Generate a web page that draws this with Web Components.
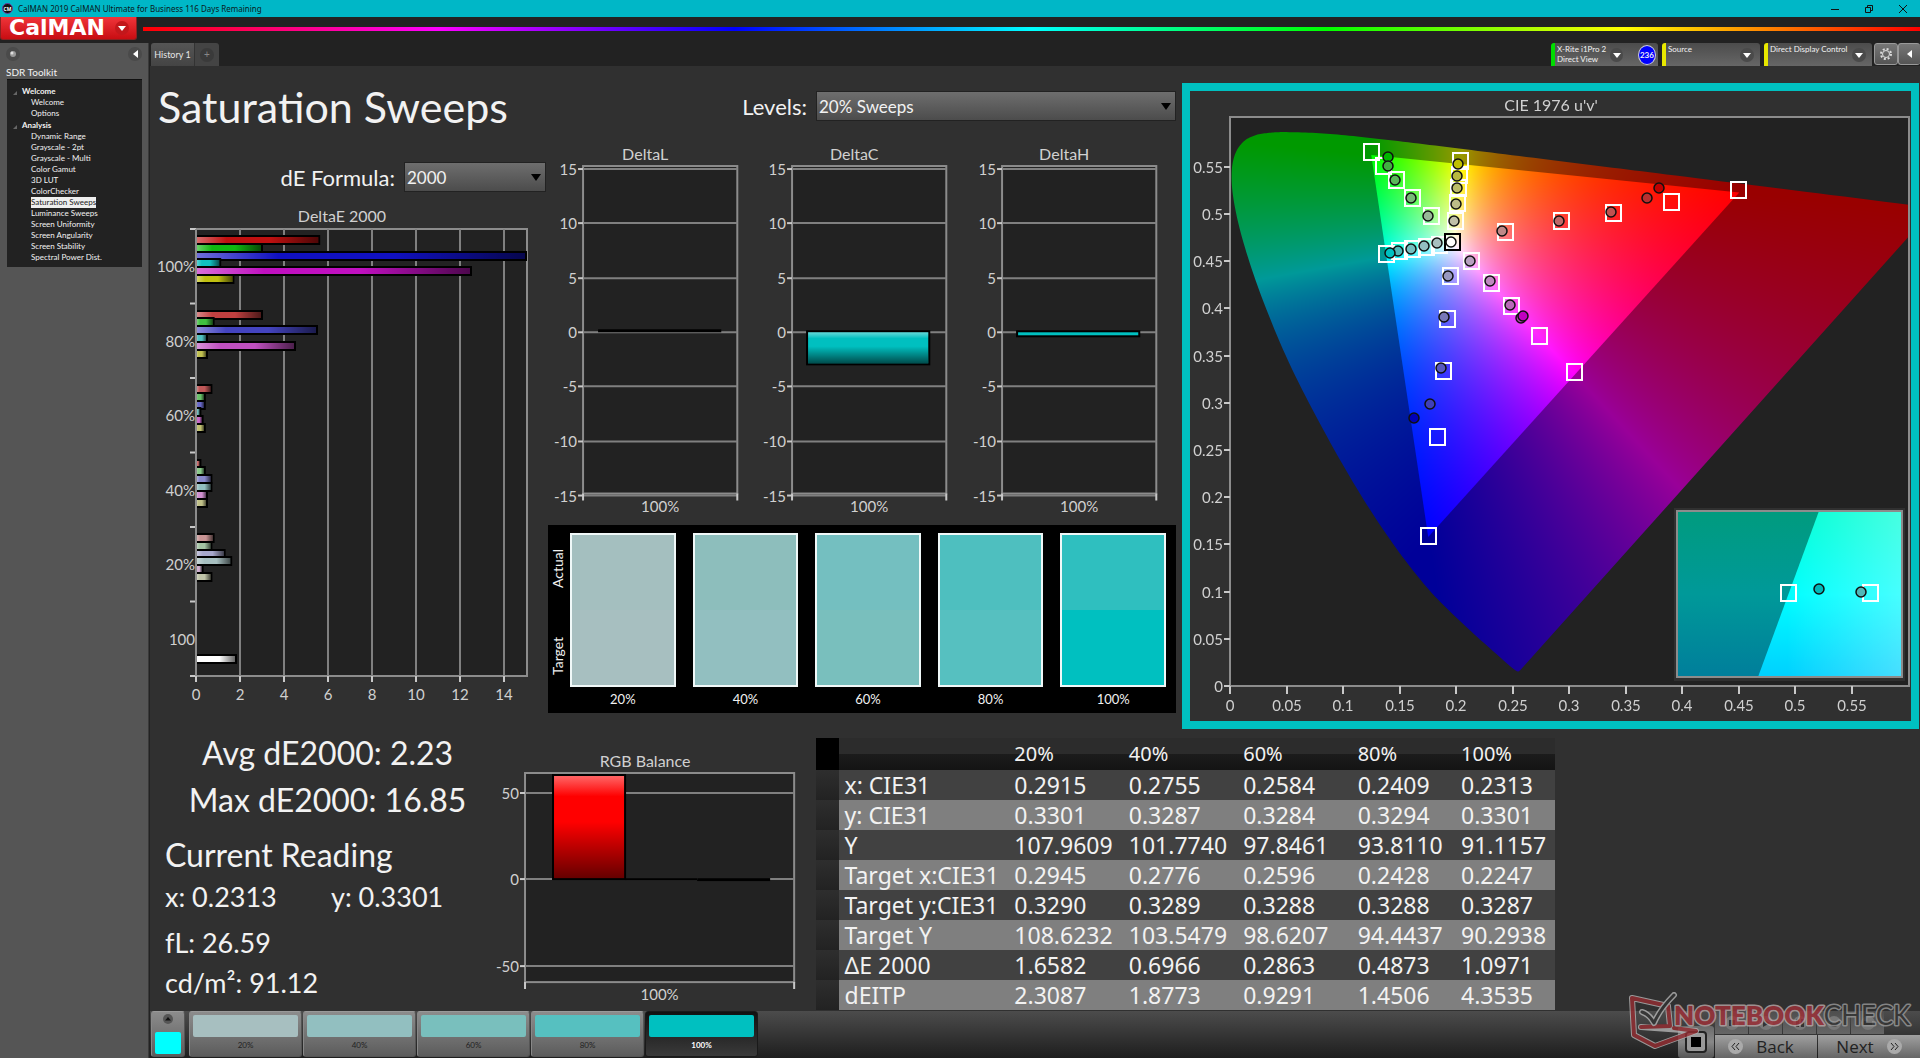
<!DOCTYPE html>
<html lang="en">
<head>
<meta charset="utf-8">
<title>CalMAN 2019</title>
<style>
  html, body { margin: 0; height: 100%; }
  body {
    background: #222;
    color: #f2f2f2;
    font-family: Lato, "Open Sans", sans-serif;
  }
</style>
</head>
<body>
<cal-app></cal-app>

<script>
const SVG_ARROW = '<svg viewBox="0 0 10 6" width="8" height="5"><path d="M0 0h10L5 6z" fill="#fff"/></svg>';

function define(name, html, setup) {
  const template = document.createElement('template');
  template.innerHTML = html;
  customElements.define(name, class extends HTMLElement {
    constructor() {
      super();
      this.attachShadow({ mode: 'open' }).append(template.content.cloneNode(true));
    }
    connectedCallback() {
      if (setup) setup.call(this, this.shadowRoot);
    }
  });
}

/* ---------- window title bar ---------- */
define('title-bar', `
  <style>
    :host {
      display: flex; align-items: center; height: 17px; gap: 5px; padding-left: 2px;
      background: #00b7c7; color: #0a1a1c; font: 8px "Noto Sans", sans-serif;
    }
    .name { flex: 1; }
    .logo { margin: 0; }
    .window { display: flex; }
    button { width: 34px; height: 17px; padding: 0; border: 0; background: none; }
    svg { display: block; margin: auto; }
  </style>
  <svg class="logo" width="11" height="11" viewBox="0 0 11 11">
    <circle cx="5.5" cy="5.5" r="5" fill="#111" stroke="#6b3fa0"/>
    <text x="5.5" y="7.5" font-size="5" font-weight="700" text-anchor="middle" fill="#fff">CM</text>
  </svg>
  <span class="name">CalMAN 2019 CalMAN Ultimate for Business 116 Days Remaining</span>
  <div class="window">
    <button aria-label="Minimize"><svg width="8" height="8"><path d="M0 4.5h8" stroke="#111"/></svg></button>
    <button aria-label="Restore"><svg width="8" height="8" fill="none" stroke="#111"><path d="M.5 2.5h5v5h-5zM2.5 2V.5h5v5H6"/></svg></button>
    <button aria-label="Close"><svg width="8" height="8"><path d="M0 0l8 8M8 0L0 8" stroke="#111"/></svg></button>
  </div>
`);

/* ---------- red menu button and spectrum line ---------- */
define('brand-bar', `
  <style>
    :host { display: flex; height: 26px; gap: 6px; background: #222; }
    button {
      display: flex; align-items: center; gap: 10px; width: 137px; height: 23px; padding: 0 0 0 8px;
      border: 1px solid #8c2020; border-top: 0; border-radius: 0 0 3px 3px; color: #fff;
      background: linear-gradient(#f0353a, #c80d12); font: bold 22px/22px "DejaVu Sans", sans-serif;
    }
    .dot { display: grid; place-items: center; width: 14px; height: 14px; border-radius: 50%; background: #c3171b; }
    .line {
      flex: 1; height: 4px; margin-top: 10px;
      background: linear-gradient(90deg, #f00, #f0f 16.6%, #00f 33.3%, #0ff 50%, #0f0 66.6%, #ff0 83.3%, #f00);
    }
  </style>
  <button>CalMAN<span class="dot">${SVG_ARROW}</span></button>
  <div class="line"></div>
`);

/* ---------- workflow tree ---------- */
define('tool-sidebar', `
  <style>
    :host { display: block; width: 149px; box-sizing: border-box; padding: 0 6px; background: #555; border-right: 1px solid #3a3a3a; }
    .top { display: flex; justify-content: space-between; align-items: center; height: 22px; }
    .top button { width: 14px; height: 14px; padding: 0; border: 0; border-radius: 50%; background: #4a4a4a; display: grid; place-items: center; }
    h2 { margin: 0; font: 10px/14px Lato, sans-serif; }
    nav { background: #222; border-top: 1px solid #111; padding: 5px 0 2px; margin: 0 0 0 1px; height: 180px; font-size: 8px; line-height: 11px; }
    b { display: block; padding-left: 15px; margin-top: 1px; position: relative; }
    b::before { content: ""; position: absolute; left: 6px; top: 5px; border: 2px solid transparent; border-right-color: #666; border-bottom-color: #666; }
    ul { margin: 0; padding: 0 0 0 24px; list-style: none; }
    a { color: inherit; text-decoration: none; }
    a[aria-current] { background: #eee; color: #222; display: inline-block; }
  </style>
  <div class="top">
    <button aria-label="Pin"><svg width="8" height="8"><circle cx="4" cy="4" r="3" fill="#999"/><circle cx="3" cy="3" r="1.5" fill="#ddd"/></svg></button>
    <button aria-label="Collapse"><svg width="5" height="8"><path d="M5 0v8L0 4z" fill="#fff"/></svg></button>
  </div>
  <h2>SDR Toolkit</h2>
  <nav></nav>
`, function (root) {
  const tree = {
    Welcome: ['Welcome', 'Options'],
    Analysis: ['Dynamic Range', 'Grayscale - 2pt', 'Grayscale - Multi', 'Color Gamut', '3D LUT', 'ColorChecker',
      'Saturation Sweeps', 'Luminance Sweeps', 'Screen Uniformity', 'Screen Angularity', 'Screen Stability', 'Spectral Power Dist.'],
  };
  root.querySelector('nav').innerHTML = Object.entries(tree).map(([group, items]) => `
    <b>${group}</b>
    <ul>${items.map((t) => `<li><a href="#"${t === 'Saturation Sweeps' ? ' aria-current="page"' : ''}>${t}</a></li>`).join('')}</ul>
  `).join('');
});

/* ---------- history tabs and devices ---------- */
define('device-button', `
  <style>
    :host { display: block; }
    button {
      display: flex; box-sizing: border-box; width: 100%; height: 23px; padding: 1px 6px 0 2px; gap: 4px; text-align: left;
      border: 0; border-left: 4px solid var(--led); border-radius: 3px 3px 0 0; color: #f2f2f2;
      background: linear-gradient(#4c4c4c, #666); font: 8px/10px Lato, sans-serif;
    }
    .text { flex: 1; white-space: nowrap; }
    .dot { display: grid; place-items: center; width: 14px; height: 14px; margin-top: 4px; border-radius: 50%; background: #4a4a4a; }
  </style>
  <button><span class="text"><slot></slot></span><span class="dot">${SVG_ARROW}</span><slot name="badge"></slot></button>
`);

define('tab-strip', `
  <style>
    :host { display: flex; height: 23px; padding-left: 1px; background: #222; }
    button { padding: 0; color: #e6e6e6; }
    .tab { width: 44px; border: 0; border-right: 1px solid #333; border-radius: 3px 0 0 0; background: linear-gradient(#555, #444); font: 9px Lato, sans-serif; }
    .add { width: 24px; border: 0; border-radius: 0 3px 0 0; background: #444; color: #888; font-size: 10px; }
    .add span { display: block; width: 14px; margin: auto; border-radius: 50%; background: #3a3a3a; line-height: 14px; }
    .devices { display: flex; gap: 4px; margin-left: auto; }
    .badge {
      width: 18px; height: 18px; margin: 1px -4px 0 11px; border: 1px solid #ccd; border-radius: 50%;
      background: #00f; font: bold 8px/18px Lato, sans-serif; text-align: center;
    }
    .tools { display: flex; margin-left: -2px; }
    .tools button { display: grid; place-items: center; width: 24px; height: 22px; border: 1px solid #999; border-radius: 3px; background: linear-gradient(#777, #555); }
    .tools button:last-child { width: 22px; border-right: 0; }
  </style>
  <button class="tab">History 1</button><button class="add" aria-label="New tab"><span>+</span></button>
  <div class="devices">
    <device-button style="width:107px;--led:#0d0">X-Rite i1Pro 2<br>Direct View<span class="badge" slot="badge">236</span></device-button>
    <device-button style="width:98px;--led:#e8e800">Source</device-button>
    <device-button style="width:108px;--led:#e8e800">Direct Display Control</device-button>
    <div class="tools">
      <button aria-label="Settings"><svg width="14" height="14" viewBox="0 0 14 14" fill="none" stroke="#ddd">
        <circle cx="7" cy="7" r="3.5"/><circle cx="7" cy="7" r="5" stroke-width="2" stroke-dasharray="2 1.93"/></svg></button>
      <button aria-label="Collapse"><svg width="5" height="8"><path d="M5 0v8L0 4z" fill="#fff"/></svg></button>
    </div>
  </div>
`);

/* ---------- labelled drop-down ---------- */
define('pick-list', `
  <style>
    :host { display: flex; align-items: center; justify-content: flex-end; gap: 9px; }
    label { font-size: 22px; white-space: nowrap; }
    .box { position: relative; width: var(--w); }
    select {
      appearance: none; display: block; width: 100%; height: 30px; padding: 0 2px; border: 1px solid #222; border-radius: 0;
      background: linear-gradient(#6e6e6e, #4c4c4c); color: #f2f2f2; font: 17px Lato, sans-serif;
    }
    svg { position: absolute; right: 5px; top: 12px; }
  </style>
  <label for="s"></label>
  <div class="box"><select id="s"><option></option></select><svg width="10" height="7"><path d="M0 0h10L5 7z" fill="#000"/></svg></div>
`, function (root) {
  root.querySelector('label').textContent = this.getAttribute('label');
  root.querySelector('option').textContent = this.getAttribute('value');
});

const CHART_CSS = `
  :host { display: block; min-width: 0; }
  svg { display: block; width: 100%; height: auto; }
  text { font: 15px Lato, sans-serif; fill: #d0d0d0; }
  .title { font-size: 16px; text-anchor: middle; }
  .end { text-anchor: end; }
  .mid { text-anchor: middle; }
  .plot { fill: #222; stroke: #8c8c8c; stroke-width: 2; }
  .grid { stroke: #808080; stroke-width: 2; }
  .tick { stroke: #c8c8c8; stroke-width: 2; }
`;

/* ---------- DeltaE by saturation, horizontal bars ---------- */
define('sweep-chart', `<style>${CHART_CSS}</style><svg viewBox="0 0 398 508"></svg>`, function (root) {
  const left = 46, top = 25, right = 377, bottom = 472, unit = 22;
  const groups = [
    ['100%', [5.6, 3, 15, 1.1, 12.5, 1.7], ['#c01010', '#10b810', '#1010c0', '#10c0c0', '#c010c0', '#c0c010']],
    ['80%', [3, .8, 5.5, .5, 4.5, .5], ['#c04040', '#40c040', '#4444c0', '#50c0c0', '#c050c0', '#c0c050']],
    ['60%', [.7, .4, .4, .2, .3, .4], ['#c05858', '#68c068', '#6868c8', '#74c0c0', '#c868c8', '#c0c070']],
    ['40%', [.2, .4, .7, .7, .5, .5], ['#d07070', '#88c888', '#8888cc', '#92bfc0', '#d090d0', '#c0c088']],
    ['20%', [.8, .7, 1.3, 1.6, .3, .7], ['#c89494', '#a4c4a4', '#a8a8cc', '#a7bfc0', '#d0b0d0', '#c0c4a8']],
    ['100', [], []],
  ];
  let out = `<text class="title" x="192" y="18">DeltaE 2000</text><rect class="plot" x="${left}" y="${top}" width="${right - left}" height="${bottom - top}"/>`;
  let defs = '';
  for (let v = 0; v <= 14; v += 2) {
    const x = left + v * unit;
    if (v) out += `<path class="grid" d="M${x} ${top}V${bottom}"/>`;
    out += `<path class="tick" d="M${x} ${bottom}v6"/><text class="mid" x="${x}" y="496">${v}</text>`;
  }
  const bar = (id, y, w, color) => {
    defs += `<linearGradient id="${id}"><stop offset="0" stop-color="#fff" stop-opacity=".4"/><stop offset=".25" stop-color="#fff" stop-opacity="0"/><stop offset=".6" stop-opacity="0"/><stop offset="1" stop-opacity=".6"/></linearGradient>`;
    out += `<path d="M${left} ${y - 4}h${w}v8h-${w}" fill="${color}" stroke="#000" stroke-width="2"/><rect x="${left}" y="${y - 3}" width="${w - 1}" height="6" fill="url(#${id})"/>`;
  };
  groups.forEach(([name, values, colors], g) => {
    const y = top + g * 74.5;
    out += `<path class="tick" d="M${left - 6} ${y}h6"/><text class="end" x="${left - 1}" y="${y + 43}">${name}</text>`;
    values.forEach((v, i) => bar(`b${g}${i}`, Math.round(y + 11 + i * 7.8), Math.min(v * unit, right - left), colors[i]));
  });
  bar('bw', 455, 40, '#fff');
  out += `<path class="tick" d="M${left - 6} ${bottom}h6"/><path d="M${left} ${top}V${bottom}" stroke="#8c8c8c" stroke-width="2"/>`;
  root.querySelector('svg').innerHTML = `<defs>${defs}</defs>${out}`;
});

/* ---------- vertical bar chart around zero ---------- */
const DELTA = { size: [209, 374], plot: [35, 20, 189, 347], max: 15.25, unit: 10.87, ticks: [15, 10, 5, 0, -5, -10, -15] };
const CHARTS = {
  DeltaL: { ...DELTA, bars: [[50, 123, .3, '#000']] },
  DeltaC: { ...DELTA, bars: [[50, 122, -3, '#00c0c0']] },
  DeltaH: { ...DELTA, bars: [[50, 122, -.45, '#00c0c0']] },
  'RGB Balance': {
    size: [290, 252], plot: [15, 20, 284, 229], max: 61, unit: 1.73, ticks: [50, 0, -50], titleX: 135,
    bars: [[43, 72, 60, '#f00'], [115, 72, -.5, '#000'], [187, 73, -1.8, '#000']],
  },
};

define('delta-chart', `<style>${CHART_CSS} svg { overflow: visible; }</style><svg></svg>`, function (root) {
  const name = this.getAttribute('name');
  const { size, plot: [l, t, r, b], max, unit, ticks, bars, titleX } = CHARTS[name];
  const zero = Math.round(t + max * unit);
  let out = `<defs><linearGradient id="shade" x2="0" y2="1">
    <stop offset="0" stop-color="#fff" stop-opacity=".4"/><stop offset=".2" stop-color="#fff" stop-opacity="0"/>
    <stop offset=".45" stop-opacity="0"/><stop offset="1" stop-opacity=".6"/></linearGradient></defs>
    <text class="title" x="${titleX || 97}" y="14">${name}</text>
    <rect class="plot" x="${l}" y="${t}" width="${r - l}" height="${b - t}"/>`;
  ticks.forEach((v) => {
    const y = Math.round(zero - v * unit);
    out += `<path class="grid" d="M${l} ${y}H${r}"/><path class="tick" d="M${l - 5} ${y}h5"/><text class="end" x="${l - 6}" y="${y + 6}">${v}</text>`;
  });
  out += `<path class="tick" d="M${l} ${b}v7M${r} ${b}v7"/><text class="mid" x="${(l + r) / 2}" y="${b + 18}">100%</text>`;
  bars.forEach(([x, w, v, color]) => {
    const h = Math.max(2, Math.round(Math.abs(v) * unit));
    const y = v > 0 ? zero - h : zero - 1;
    const edge = color === '#000' ? 'none' : '#000';
    out += `<rect x="${x}" y="${y}" width="${w}" height="${h}" fill="${color}" stroke="${edge}" stroke-width="2"/>`;
    if (h > 8) out += `<rect x="${x + 1}" y="${y + 1}" width="${w - 2}" height="${h - 2}" fill="url(#shade)"/>`;
  });
  const svg = root.querySelector('svg');
  svg.setAttribute('viewBox', `0 0 ${size.join(' ')}`);
  svg.innerHTML = out;
});

/* ---------- actual / target swatches ---------- */
const STEPS = [
  ['20%', '#a4bfbf', '#a7bfc0'], ['40%', '#8dbebc', '#92bfc0'], ['60%', '#74bfc0', '#79bfbd'],
  ['80%', '#4ebfbf', '#56c0c0'], ['100%', '#2fbfbf', '#00c0c0'],
];

define('swatch-panel', `
  <style>
    :host { display: flex; box-sizing: border-box; height: 188px; padding: 0 10px 0 2px; gap: 4px; background: #000; }
    .side { display: flex; flex-direction: column; width: 16px; height: 174px; }
    .side span { flex: 1; writing-mode: vertical-rl; transform: rotate(180deg); text-align: center; font-size: 14px; line-height: 16px; }
    .row { flex: 1; display: flex; gap: 17px; padding-top: 8px; }
    figure { flex: 1; margin: 0; text-align: center; font-size: 13px; line-height: 24px; }
    .color { height: 150px; border: 2px solid #f0f8f8; background: linear-gradient(var(--a) 50%, var(--t) 50%); }
  </style>
  <div class="side"><span>Actual</span><span>Target</span></div>
  <div class="row">${STEPS.map(([n, a, t]) => `<figure><div class="color" style="--a:${a};--t:${t}"></div><figcaption>${n}</figcaption></figure>`).join('')}</div>
`);

/* ---------- CIE 1976 u'v' diagram ---------- */
const LOCUS = [
  [.1741, .005], [.1714, .0051], [.1644, .0109], [.1566, .0177], [.144, .0297], [.1355, .0399], [.1241, .0578],
  [.1096, .0868], [.0913, .1327], [.0687, .2007], [.0454, .295], [.0235, .4127], [.0082, .5384], [.0039, .6548],
  [.0139, .7502], [.0389, .812], [.0743, .8338], [.1142, .8262], [.1547, .8059], [.2296, .7543], [.3016, .6923],
  [.3731, .6245], [.4441, .5547], [.5125, .4866], [.5752, .4242], [.627, .3725], [.6915, .3083], [.7347, .2653],
];
const GAMUT = [[.4507, .5229], [.125, .5625], [.1754, .1579]];
const PLOT = { x: 40, y: 26, w: 679, h: 569, ux: 1130, vy: 944 };
const TARGETS = [
  [181, 61], [193, 75], [206, 89], [222, 107], [241, 125],
  [270, 70], [269, 84], [268, 97], [267, 112], [265, 130],
  [315, 141], [371, 130], [423, 122], [481, 111], [548, 99],
  [196, 163], [209, 160], [222, 158], [236, 156], [249, 154],
  [281, 170], [301, 192], [321, 215], [349, 245], [384, 281],
  [260, 185], [257, 228], [253, 280], [247, 346], [238, 445],
];
const READINGS = [
  [198, 66, '#00b800'], [198, 75, '#40b040'], [205, 89, '#58b858'], [221, 107, '#78b878'], [238, 125, '#98b898'],
  [268, 73, '#c0c000'], [267, 85, '#b8b840'], [267, 97, '#bcbc68'], [266, 113, '#bcbc88'], [264, 130, '#c0c0a8'],
  [312, 140, '#c08888'], [369, 130, '#c06868'], [421, 121, '#c05050'], [457, 107, '#b83030'], [469, 97, '#c00000'],
  [208, 160, '#50b8b8'], [200, 162, '#00c0c0'], [221, 158, '#74bfc0'], [234, 155, '#92bfc0'], [247, 152, '#a7bfc0'],
  [280, 170, '#b8a0c0'], [300, 190, '#c088c0'], [320, 214, '#b868b8'], [331, 227, '#b040b0'], [333, 225, '#c000c0'],
  [258, 185, '#9898c0'], [254, 226, '#7878b8'], [251, 277, '#5858c0'], [240, 313, '#4040b8'], [224, 327, '#0000b8'],
];

define('cie-diagram', `
  <style>
    ${CHART_CSS}
    :host { display: grid; align-self: start; border: 8px solid #00c0c0; background: #303030; }
    canvas, svg { grid-area: 1 / 1; width: 100%; height: auto; }
    .hollow { fill: none; stroke: #8c8c8c; stroke-width: 2; }
    .mark { fill: none; stroke: #fff; stroke-width: 2; }
    circle { stroke: #101010; stroke-width: 1.5; }
  </style>
  <canvas width="721" height="630"></canvas>
  <svg viewBox="0 0 721 630"></svg>
`, function (root) {
  const px = (u) => PLOT.x + u * PLOT.ux;
  const py = (v) => PLOT.y + PLOT.h - v * PLOT.vy;

  // linear sRGB mix for a chromaticity, negatives clipped, brightest channel at full
  const color = (u, v) => {
    const d = 6 * u - 16 * v + 12;
    const x = 9 * u / d, y = Math.max(4 * v / d, 1e-4), z = 1 - x - y;
    const rgb = [
      3.2406 * x - 1.5372 * y - .4986 * z,
      -.9689 * x + 1.8758 * y + .0415 * z,
      .0557 * x - .204 * y + 1.057 * z,
    ].map((c) => Math.max(0, c));
    const top = Math.max(...rgb);
    return rgb.map((c) => 255 * c / top);
  };
  const layer = (level) => {
    const c = document.createElement('canvas');
    c.width = 721; c.height = 630;
    const ctx = c.getContext('2d');
    const img = ctx.createImageData(c.width, c.height);
    for (let j = 0; j < c.height; j++) {
      for (let i = 0; i < c.width; i++) {
        const rgb = color((i - PLOT.x) / PLOT.ux, (PLOT.y + PLOT.h - j) / PLOT.vy);
        const k = 4 * (j * c.width + i);
        for (let n = 0; n < 3; n++) img.data[k + n] = rgb[n] * level;
        img.data[k + 3] = 255;
      }
    }
    ctx.putImageData(img, 0, 0);
    return c;
  };
  const ctx = root.querySelector('canvas').getContext('2d');
  ctx.fillStyle = '#222';
  ctx.fillRect(PLOT.x, PLOT.y, PLOT.w, PLOT.h);
  ctx.beginPath();
  ctx.rect(PLOT.x, PLOT.y, PLOT.w, PLOT.h);
  ctx.clip();
  const paint = (points, level) => {
    ctx.save();
    ctx.beginPath();
    points.forEach(([u, v]) => ctx.lineTo(px(u), py(v)));
    ctx.closePath();
    ctx.clip();
    ctx.drawImage(layer(level), 0, 0);
    ctx.restore();
  };
  // Catmull-Rom through the spectral points keeps the green end round
  const uv = LOCUS.map(([x, y]) => [4 * x / (-2 * x + 12 * y + 3), 9 * y / (-2 * x + 12 * y + 3)]);
  const smooth = [];
  for (let i = 0; i < uv.length - 1; i++) {
    const p = [uv[Math.max(i - 1, 0)], uv[i], uv[i + 1], uv[Math.min(i + 2, uv.length - 1)]];
    for (let t = 0; t < 1; t += .1) {
      smooth.push([0, 1].map((k) => .5 * (2 * p[1][k] + (p[2][k] - p[0][k]) * t
        + (2 * p[0][k] - 5 * p[1][k] + 4 * p[2][k] - p[3][k]) * t * t
        + (3 * p[1][k] - p[0][k] - 3 * p[2][k] + p[3][k]) * t * t * t)));
    }
  }
  smooth.push(uv[uv.length - 1]);
  paint(smooth, .6);
  paint(GAMUT, 1);

  const bottom = PLOT.y + PLOT.h;
  let out = `<text class="title" x="361" y="20">CIE 1976 u'v'</text><rect class="hollow" x="${PLOT.x}" y="${PLOT.y}" width="${PLOT.w}" height="${PLOT.h}"/>`;
  for (let n = 0; n < 12; n++) {
    const v = n * 5 / 100;
    const x = Math.round(px(v)), y = Math.round(py(v));
    out += `<path class="tick" d="M${x} ${bottom}v8M${PLOT.x - 6} ${y}h6"/>
      <text class="mid" x="${x}" y="${bottom + 25}">${v}</text><text class="end" x="${PLOT.x - 7}" y="${y + 6}">${v}</text>`;
  }
  const square = (x, y, s = '') => `<rect class="mark" x="${x - 7}" y="${y - 8}" width="15" height="16" ${s}/>`;
  const dot = (x, y, c) => `<circle cx="${x}" cy="${y}" r="5" fill="${c}"/>`;
  out += TARGETS.map(([x, y]) => square(x, y)).join('') + READINGS.map((r) => dot(...r)).join('');
  out += square(262, 151, 'style="stroke:#000"') + dot(261, 151, '#fff');
  // close-up of the selected cyan target
  out += `<defs>
      <linearGradient id="dim" x2="0" y2="1"><stop stop-color="#009b7e"/><stop offset=".5" stop-color="#099"/><stop offset="1" stop-color="#007e9b"/></linearGradient>
      <linearGradient id="lit" x2="0" y2="1"><stop stop-color="#00ffd4"/><stop offset=".5" stop-color="#0ff"/><stop offset="1" stop-color="#00d0ff"/></linearGradient>
      <linearGradient id="pale"><stop offset=".2" stop-color="#fff" stop-opacity="0"/><stop offset="1" stop-color="#fff" stop-opacity=".28"/></linearGradient>
    </defs>
    <rect x="484" y="417" width="231" height="173" fill="#303030"/>
    <rect x="487" y="420" width="225" height="166" fill="url(#dim)"/>
    <path d="M629 420H712V586H568z" fill="url(#lit)"/><path d="M629 420H712V586H568z" fill="url(#pale)"/>
    <rect class="hollow" x="487" y="420" width="225" height="166"/>
    ${square(598, 502)}${square(680, 502)}${dot(629, 498, '#00b8b8')}${dot(671, 501, '#50b8b8')}`;
  root.querySelector('svg').innerHTML = out;
});

/* ---------- current reading ---------- */
define('reading-panel', `
  <style>
    :host { display: block; padding-left: 15px; }
    p { margin: 0; font-size: 27px; line-height: 40px; white-space: nowrap; }
    .sum { padding-right: 20px; font-size: 32px; line-height: 47px; text-align: center; }
    .now { font-size: 32px; line-height: 44px; margin-top: 10px; }
    .xy { display: grid; grid-template-columns: 166px 1fr; }
    .lum { margin-top: 6px; }
  </style>
  <p class="sum">Avg dE2000: 2.23</p>
  <p class="sum">Max dE2000: 16.85</p>
  <p class="now">Current Reading</p>
  <p class="xy"><span>x: 0.2313</span><span>y: 0.3301</span></p>
  <p class="lum">fL: 26.59</p>
  <p>cd/m²: 91.12</p>
`);

/* ---------- measurement table ---------- */
define('data-table', `
  <style>
    :host { display: block; }
    table { width: 100%; table-layout: fixed; border-collapse: collapse; font: 23px/30px "Noto Sans", sans-serif; }
    th, td { height: 30px; padding: 0 0 0 6px; text-align: left; font-weight: 400; white-space: nowrap; }
    thead th { height: 32px; font-size: 20px; background: linear-gradient(#2c2c2c 50%, #1c1c1c 50%, #141414); }
    thead td { height: 32px; background: #000; }
    thead td + td { background: linear-gradient(#2c2c2c 50%, #1c1c1c 50%, #141414); }
    tbody tr { background: #414141; }
    tbody tr:nth-child(even) { background: #7f7f7f; }
    tbody td:first-child { background: linear-gradient(#2e2e2e, #222); }
  </style>
  <table>
    <colgroup><col style="width:3%"><col style="width:23%"><col style="width:15.5%"><col style="width:15.5%"><col style="width:15.5%"><col style="width:14%"><col></colgroup>
    <thead><tr><td></td><td></td>${STEPS.map(([n]) => `<th scope="col">${n}</th>`).join('')}</tr></thead>
    <tbody></tbody>
  </table>
`, function (root) {
  const rows = [
    ['x: CIE31', '0.2915', '0.2755', '0.2584', '0.2409', '0.2313'],
    ['y: CIE31', '0.3301', '0.3287', '0.3284', '0.3294', '0.3301'],
    ['Y', '107.9609', '101.7740', '97.8461', '93.8110', '91.1157'],
    ['Target x:CIE31', '0.2945', '0.2776', '0.2596', '0.2428', '0.2247'],
    ['Target y:CIE31', '0.3290', '0.3289', '0.3288', '0.3288', '0.3287'],
    ['Target Y', '108.6232', '103.5479', '98.6207', '94.4437', '90.2938'],
    ['ΔE 2000', '1.6582', '0.6966', '0.2863', '0.4873', '1.0971'],
    ['dEITP', '2.3087', '1.8773', '0.9291', '1.4506', '4.3535'],
  ];
  root.querySelector('tbody').innerHTML = rows.map(([name, ...cells]) =>
    `<tr><td></td><th scope="row">${name}</th>${cells.map((c) => `<td>${c}</td>`).join('')}</tr>`).join('');
});

/* ---------- bottom bar ---------- */
define('level-bar', `
  <style>
    :host { display: flex; height: 47px; padding-left: 1px; background: linear-gradient(#4c4c4c, #1e1e1e); }
    button { padding: 0; border: 0; color: #222; }
    .probe, .level { box-sizing: border-box; height: 46px; border: 1px solid #999; border-color: #999 #555 #555 #888; border-radius: 3px; background: linear-gradient(#8c8c8c, #5c5c5c); }
    .probe { width: 34px; margin-right: 4px; padding: 2px 3px; display: flex; flex-direction: column; align-items: center; justify-content: space-between; }
    .probe i { width: 26px; height: 22px; background: #0ff; border-radius: 2px; }
    .level { width: 113px; margin-right: 1px; padding: 3px; display: flex; flex-direction: column; font: 8px/16px Lato, sans-serif; }
    .level i { width: 100%; height: 27px; border-radius: 2px; background: var(--c); }
    .level span { width: 100%; }
    .level.on { border-color: #1a1a1a; background: linear-gradient(#111, #3a3a3a); color: #fff; font-weight: 700; }
    .nav { display: grid; grid-template: 24px 23px / 36px 102px 102px; margin-left: auto; column-gap: 1px; }
    .stop { grid-row: 1 / 3; margin-top: 15px; border-radius: 3px; background: linear-gradient(#6a6a6a, #888, #555); display: grid; place-items: center; }
    .small { grid-column: 2 / 4; display: flex; gap: 1px; }
    .small button { width: 33px; height: 23px; background: linear-gradient(#4e4e4e, #666); display: grid; place-items: center; }
    .big { display: flex; align-items: center; justify-content: center; gap: 13px; background: linear-gradient(#a0a0a0, #666); font: 17px "Open Sans", sans-serif; }
    .big i { display: grid; place-items: center; width: 15px; height: 15px; border-radius: 50%; background: #aaa; }
    .back { padding-right: 10px; }
  </style>
  <button class="probe" aria-label="Pattern"><svg width="10" height="10"><circle cx="5" cy="5" r="5" fill="#555"/><path d="M2 6.5L5 3l3 3.5z" fill="#111"/></svg><i></i></button>
  ${STEPS.map(([n, , t]) => `<button class="level${n === '100%' ? ' on' : ''}" style="--c:${t}"><i></i><span>${n}</span></button>`).join('')}
  <div class="nav">
    <button class="stop" aria-label="Stop"><svg width="24" height="24"><rect x="2" y="2" width="20" height="20" rx="3" fill="#999" stroke="#222" stroke-width="2"/><path d="M7 7h10v10H7z"/></svg></button>
    <div class="small">${['M4 4h6v6H4z', 'M4 3l7 4-7 4z', 'M3 3h3v8H3zM8 3h3v8H8z', 'M3 7a4 4 0 1 0 8 0h-2a2 2 0 1 1-4 0z', 'M3 5h8v4H3z'].map((d, i) =>
      `<button aria-label="Read mode ${i + 1}"><svg width="14" height="14"><circle cx="7" cy="7" r="7" fill="#777"/><path d="${d}" fill="#333"/></svg></button>`).join('')}</div>
    <button class="big back"><i><svg width="9" height="9" fill="none" stroke="#222"><path d="M4 1L1 4.5 4 8M8 1L5 4.5 8 8"/></svg></i>Back</button>
    <button class="big">Next<i><svg width="9" height="9" fill="none" stroke="#222"><path d="M1 1l3 3.5L1 8M5 1l3 3.5L5 8"/></svg></i></button>
  </div>
`);

define('check-watermark', `
  <style>
    :host { position: absolute; right: 8px; bottom: 8px; opacity: .8; pointer-events: none; }
    svg { display: block; overflow: visible; }
    text { font: 800 26px Lato, sans-serif; paint-order: stroke; stroke-width: 3; stroke-linejoin: round; }
  </style>
  <svg width="284" height="58" viewBox="0 0 284 58" fill="none" stroke-linejoin="round" stroke-linecap="round">
    <g stroke="#b4b4b4" stroke-width="6"><path d="M4 6L40 14M4 6L6 43 27 54 68 39 13 35M40 14L42 34"/></g>
    <g stroke="#962d32" stroke-width="4"><path d="M4 6L40 14M4 6L6 43 27 54 68 39 46 36M13 35L42 34 40 14"/></g>
    <path d="M14 20Q21 22 26 31 32 17 46 3" stroke="#b4b4b4" stroke-width="6"/><path d="M14 20Q21 22 26 31 32 17 46 3" stroke="#333" stroke-width="3"/>
    <text x="46" y="33" fill="#a03038" stroke="#b8a8a8">NOTEBOOK<tspan style="font-weight:400" fill="#333" stroke="#999">CHECK</tspan></text>
  </svg>
`);

/* ---------- page ---------- */
define('cal-app', `
  <style>
    :host { display: flex; flex-direction: column; min-height: 100vh; position: relative; }
    .body { flex: 1; display: grid; grid-template: auto 1fr auto / 150px 1fr; }
    tool-sidebar { grid-row: 1 / 4; }
    main { background: #303030; }
    .top { display: grid; grid-template-columns: 398fr 628fr 743fr; padding-right: 1px; }
    cie-diagram { margin-top: 17px; }
    .right { padding-left: 6px; }
    h1 { margin: 0; padding: 6px 0 0 8px; height: 88px; box-sizing: border-box; font: 43px/70px Lato, sans-serif; white-space: nowrap; }
    .formula { --w: 142px; height: 46px; padding: 0 2px 4px 0; }
    .levels { --w: 360px; height: 80px; box-sizing: border-box; }
    .deltas { display: grid; grid-template-columns: repeat(3, 1fr); }
    swatch-panel { margin-top: 4px; }
    .bottom { display: grid; grid-template-columns: 360fr 290fr 16fr 738fr 365fr; }
    .rgb { padding-top: 24px; }
    data-table { margin-top: 9px; }
  </style>
  <title-bar></title-bar>
  <brand-bar></brand-bar>
  <div class="body">
    <tool-sidebar></tool-sidebar>
    <tab-strip></tab-strip>
    <main>
      <div class="top">
        <div>
          <h1>Saturation Sweeps</h1>
          <pick-list class="formula" label="dE Formula:" value="2000"></pick-list>
          <sweep-chart></sweep-chart>
        </div>
        <div>
          <pick-list class="levels" label="Levels:" value="20% Sweeps"></pick-list>
          <div class="deltas">
            <delta-chart name="DeltaL"></delta-chart>
            <delta-chart name="DeltaC"></delta-chart>
            <delta-chart name="DeltaH"></delta-chart>
          </div>
          <swatch-panel></swatch-panel>
        </div>
        <div class="right"><cie-diagram></cie-diagram></div>
      </div>
      <div class="bottom">
        <reading-panel></reading-panel>
        <delta-chart class="rgb" name="RGB Balance"></delta-chart>
        <span></span>
        <data-table></data-table>
      </div>
    </main>
    <level-bar></level-bar>
  </div>
  <check-watermark></check-watermark>
`);
</script>
</body>
</html>
